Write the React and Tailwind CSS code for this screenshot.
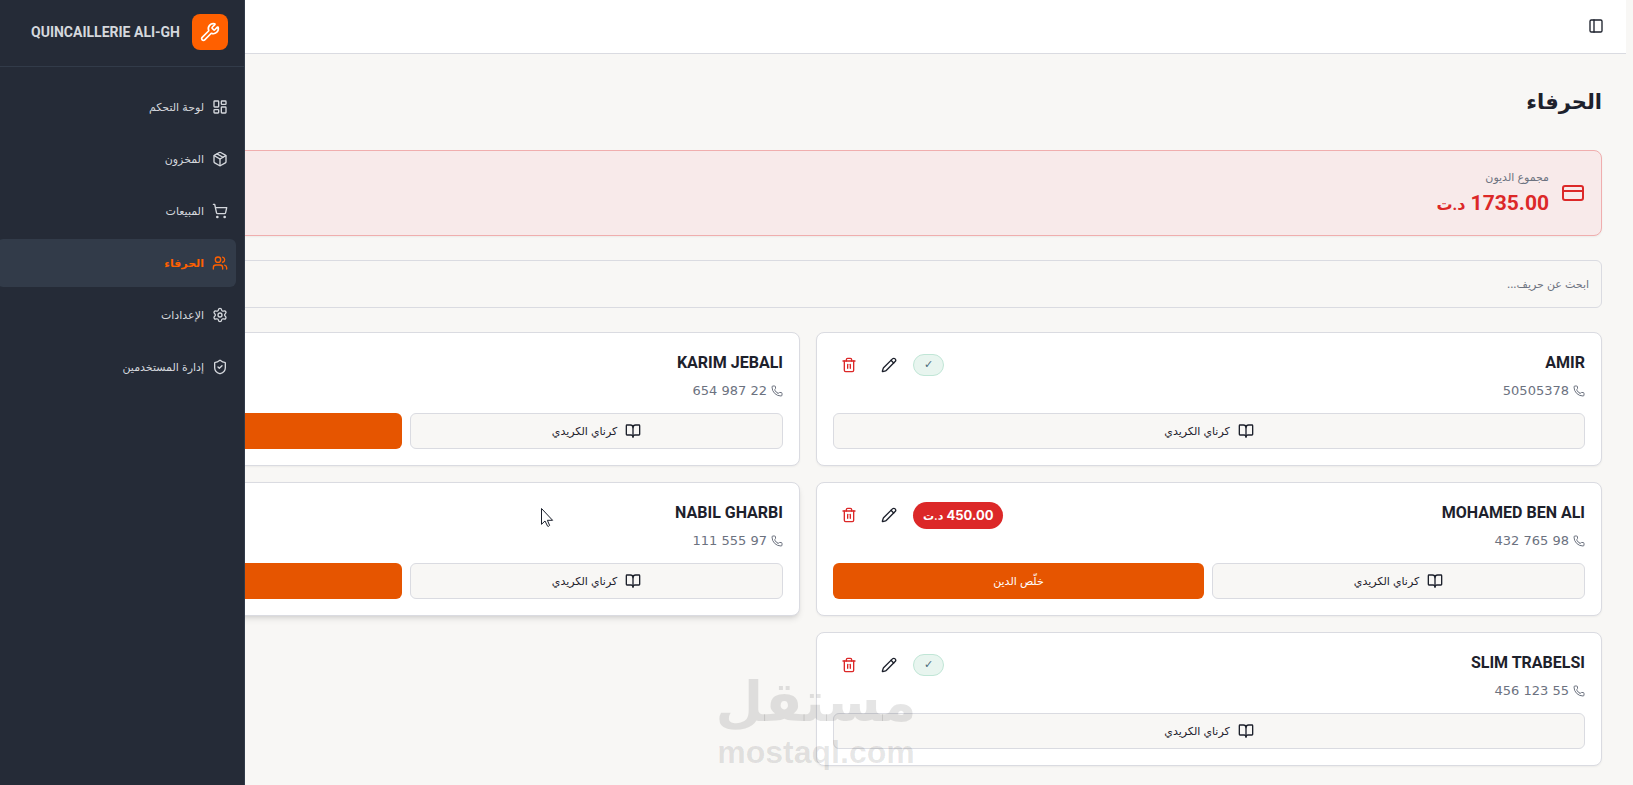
import { useState } from "react";
import {
  BookOpen,
  CreditCard,
  LayoutDashboard,
  Package,
  PanelLeft,
  Pencil,
  Phone,
  Settings,
  ShieldCheck,
  ShoppingCart,
  Trash2,
  Users,
  Wrench,
} from "lucide-react";

const NAV = [
  { key: "dashboard", label: "لوحة التحكم", icon: LayoutDashboard },
  { key: "stock", label: "المخزون", icon: Package },
  { key: "sales", label: "المبيعات", icon: ShoppingCart },
  { key: "customers", label: "الحرفاء", icon: Users },
  { key: "settings", label: "الإعدادات", icon: Settings },
  { key: "users", label: "إدارة المستخدمين", icon: ShieldCheck },
];

// debt is left out where the exact amount is not known yet
const CUSTOMERS = [
  { name: "AMIR", phone: "50505378", owes: false },
  { name: "KARIM JEBALI", phone: "22 987 654", owes: true },
  { name: "MOHAMED BEN ALI", phone: "98 765 432", owes: true, debt: 450 },
  { name: "NABIL GHARBI", phone: "97 555 111", owes: true, raised: true },
  { name: "SLIM TRABELSI", phone: "55 123 456", owes: false },
];

// ── Sidebar ───────────────────────────────────────────────────────
function Sidebar({ active }) {
  return (
    <aside className="fixed inset-y-0 -left-[11px] z-20 w-64 border-r border-[#323b49] bg-[#252b37] text-[#d5d8dd]">
      <div className="flex items-center gap-3 border-b border-[#323b49] px-4 pt-[14px] pb-4">
        <span className="flex size-9 items-center justify-center rounded-lg bg-[#ff6000] text-white">
          <Wrench className="size-5" />
        </span>
        <span className="font-['Roboto',sans-serif] text-sm font-bold whitespace-nowrap">
          QUINCAILLERIE ALI-GH
        </span>
      </div>

      <nav className="flex flex-col gap-1 px-2 py-4">
        {NAV.map(({ key, label, icon: Icon }) => (
          <a
            key={key}
            href={`#${key}`}
            className={`flex h-12 items-center gap-2 rounded-md px-2 text-[11px] ${
              key === active ? "bg-[#323b49] font-bold text-[#ff6000]" : ""
            }`}
          >
            <Icon className="size-4" />
            {label}
          </a>
        ))}
      </nav>
    </aside>
  );
}

// ── Debt badge ────────────────────────────────────────────────────
function DebtBadge({ owes, debt }) {
  if (!owes) {
    return (
      <span className="rounded-full border border-[#c0e6d6] bg-[#e8f5ef] px-2.5 font-['DejaVu_Sans',sans-serif] text-[11px] leading-5 text-[#4b6b7d]">
        ✓
      </span>
    );
  }
  if (!debt) return null;
  return (
    <span className="rounded-full bg-[#dc2828] px-2.5 text-[13px] leading-[26px] font-bold text-white">
      {debt.toFixed(2)} <span className="text-[11px]">د.ت</span>
    </span>
  );
}

// ── Customer card ─────────────────────────────────────────────────
function CustomerCard({ customer }) {
  return (
    <article
      className={`rounded-lg border border-[#dadbe1] bg-white p-4 ${
        customer.raised ? "shadow-md" : "shadow-xs"
      }`}
    >
      <div className="flex items-start justify-between">
        <div>
          <h2 className="font-['Roboto',sans-serif] text-base leading-7 font-bold">
            {customer.name}
          </h2>
          <p className="mt-1 flex items-center gap-1 font-['DejaVu_Sans',sans-serif] text-[13px] leading-5 text-[#6c727f]">
            <Phone className="size-3" />
            {customer.phone}
          </p>
        </div>
        <div className="flex h-8 items-center gap-2">
          <DebtBadge owes={customer.owes} debt={customer.debt} />
          <button aria-label="تعديل" className="flex size-8 items-center justify-center">
            <Pencil className="size-4" />
          </button>
          <button aria-label="حذف" className="flex size-8 items-center justify-center text-[#dc2828]">
            <Trash2 className="size-4" />
          </button>
        </div>
      </div>

      <div className="mt-3 flex gap-2">
        <button className="flex h-9 flex-1 items-center justify-center gap-2 rounded-md border border-[#dadbe1] bg-[#f8f7f5] px-3 text-[11px]">
          <BookOpen className="size-4" />
          كرناي الكريدي
        </button>
        {customer.owes && (
          <button className="h-9 flex-1 rounded-md bg-[#e65500] px-3 text-[11px] text-white">
            خلّص الدين
          </button>
        )}
      </div>
    </article>
  );
}

function Cursor() {
  return (
    <svg
      className="pointer-events-none absolute top-[507px] left-[540px] z-10 h-[21px] w-[14px]"
      viewBox="0 0 14 21"
      fill="white"
      stroke="#1a1f2b"
    >
      <path d="M1.500 1.500V17.300L5 14l2.600 5.200q1.200 .6 2-.8L7.400 13.300h5.200Z" />
    </svg>
  );
}

// ── Main screen ───────────────────────────────────────────────────
export default function App() {
  const [query, setQuery] = useState("");
  const customers = CUSTOMERS.filter((c) =>
    c.name.toLowerCase().includes(query.toLowerCase())
  );

  return (
    <div
      dir="rtl"
      className="relative min-h-screen overflow-hidden bg-[#f8f7f5] pr-[7px] font-['Inter','DejaVu_Sans',sans-serif] text-[#1d212c]"
    >
      <Sidebar active="customers" />

      <header className="flex h-[54px] items-center border-b border-[#dadbe1] bg-white px-4 pb-px">
        <button aria-label="القائمة" className="flex size-7 items-center justify-center">
          <PanelLeft className="size-4" />
        </button>
      </header>

      <main className="flex flex-col gap-6 pt-6 pr-6 pb-4 pl-[14px]">
        <h1 className="text-[21px] leading-[48px] font-bold">الحرفاء</h1>

        <section className="flex items-center gap-3 rounded-lg border border-[#f0aeae] bg-[#f8eaea] p-4 shadow-xs">
          <CreditCard className="size-6 text-[#dc2828]" />
          <div>
            <p className="text-[11px] leading-5 text-[#6c727f]">مجموع الديون</p>
            <p className="font-['Roboto','DejaVu_Sans',sans-serif] text-[21px] leading-8 font-bold text-[#dc2828]">
              1735.00 <span className="text-base">د.ت</span>
            </p>
          </div>
        </section>

        <input
          type="search"
          aria-label="ابحث عن حريف"
          placeholder="ابحث عن حريف..."
          value={query}
          onChange={(e) => setQuery(e.target.value)}
          className="h-12 w-full rounded-md border border-[#dadbe1] bg-[#f8f7f5] px-3 text-[11px] placeholder:text-[#6c727f]"
        />

        <div className="grid grid-cols-2 gap-4">
          {customers.map((c) => (
            <CustomerCard key={c.name} customer={c} />
          ))}
        </div>
      </main>

      <Cursor />

      {/* Watermark */}
      <div className="pointer-events-none absolute top-[668px] left-[718px] z-10 flex w-[196px] flex-col items-center font-bold text-black/10">
        <span className="font-['DejaVu_Sans',sans-serif] text-[55px] leading-[68px]">مستقل</span>
        <span dir="ltr" className="font-['Liberation_Sans',sans-serif] text-[32px] leading-8">
          mostaql.com
        </span>
      </div>
    </div>
  );
}
